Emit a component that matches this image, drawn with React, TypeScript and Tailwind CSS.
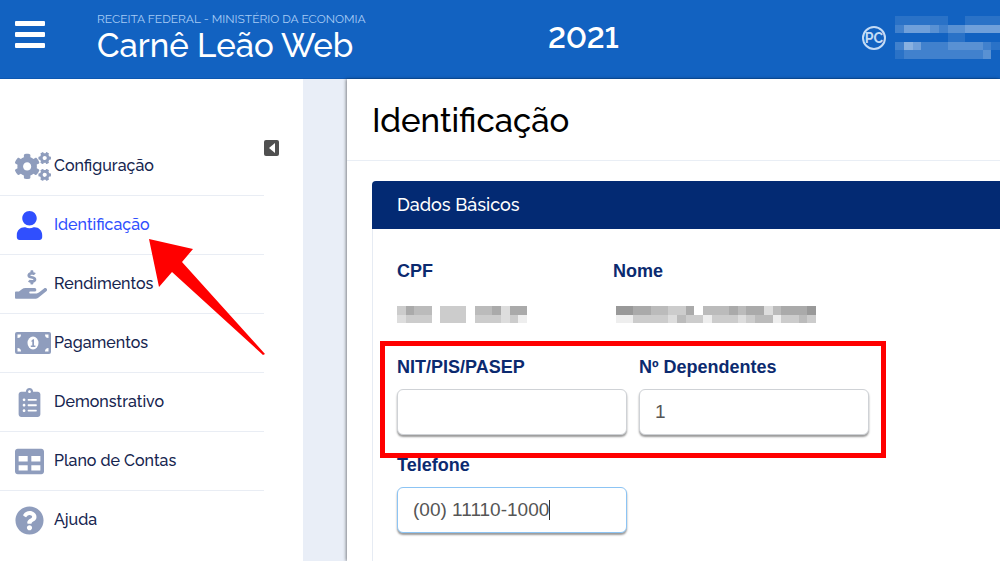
import React from 'react';
import {
  FaClipboardList,
  FaCogs,
  FaHandHoldingUsd,
  FaQuestionCircle,
  FaTable,
  FaUser,
} from 'react-icons/fa';

const BanknoteIcon: React.FC<{ className?: string }> = ({ className }) => (
  <svg className={className} viewBox="0 0 36 29" aria-hidden="true">
    <rect y="3" width="36" height="22" rx="2" fill="currentColor" />
    <path
      fill="white"
      d="M2.5 5.5h3.5a3.5 3.5 0 0 1-3.5 3.5zM33.5 5.5H30a3.5 3.5 0 0 0 3.5 3.5zM2.5 22.5H6A3.5 3.5 0 0 0 2.5 19zM33.5 22.5H30a3.5 3.5 0 0 1 3.5-3.5z"
    />
    <ellipse cx="18" cy="14" rx="5.5" ry="6.5" fill="white" />
    <path d="M16.4 11.8 18 10.3h1v6.2h1.4V18h-4.6v-1.5h1.5v-4.1l-.7.5z" fill="currentColor" />
  </svg>
);

const menuItems = [
  { id: 'configuracao', label: 'Configuração', icon: FaCogs, size: 'w-9 h-[29px]' },
  { id: 'identificacao', label: 'Identificação', icon: FaUser, size: 'size-[29px]' },
  { id: 'rendimentos', label: 'Rendimentos', icon: FaHandHoldingUsd, size: 'w-8 h-[29px]' },
  { id: 'pagamentos', label: 'Pagamentos', icon: BanknoteIcon, size: 'w-9 h-[29px]' },
  { id: 'demonstrativo', label: 'Demonstrativo', icon: FaClipboardList, size: 'size-[29px]' },
  { id: 'plano', label: 'Plano de Contas', icon: FaTable, size: 'size-[29px]' },
  { id: 'ajuda', label: 'Ajuda', icon: FaQuestionCircle, size: 'size-[29px]' },
];

// one digit per cell, 0 = empty, 9 = strongest
const userMask = ['111111001111', '244432334444', '000000110000', '254222333321', '122222222230'];
const cpfMask = ['354403330445255', '233303330333231'];
const nameMask = ['66554433504445455245556', '11333324331333234413343'];

interface MaskProps {
  rows: string[];
  className: string;
}

const Mask: React.FC<MaskProps> = ({ rows, className }) => (
  <svg
    className={className}
    viewBox={`0 0 ${rows[0].length} ${rows.length}`}
    preserveAspectRatio="none"
    shapeRendering="crispEdges"
    aria-hidden="true"
  >
    {rows.map((row, y) =>
      row.split('').map((value, x) => (
        <rect key={`${x}-${y}`} x={x} y={y} width="1" height="1" fill="currentColor" opacity={Number(value) / 10} />
      ))
    )}
  </svg>
);

const Header: React.FC = () => (
  <header className="flex h-[79px] items-start border-b border-[#0d57b0] bg-[#1262c1] text-white">
    <button type="button" aria-label="Menu" className="ml-[15px] mt-[21px] mr-[52px]">
      <svg viewBox="0 0 30 27" className="h-[27px] w-[30px]" fill="currentColor">
        <rect width="30" height="5" rx="1" />
        <rect y="11" width="30" height="5" rx="1" />
        <rect y="22" width="30" height="5" rx="1" />
      </svg>
    </button>
    <div className="w-[451px] pt-3">
      <p className="text-[12px] leading-[14px] text-[#a6cbf5]">RECEITA FEDERAL - MINISTÉRIO DA ECONOMIA</p>
      <h1 className="text-[33px] leading-10 font-medium">Carnê Leão Web</h1>
    </div>
    <span className="pt-[18px] text-[30px] leading-10 font-semibold lining-nums">2021</span>
    <div className="ml-auto flex items-start gap-[9px] pt-4">
      <span className="mt-2.5 flex size-6 items-center justify-center rounded-full border-2 border-[#c4dbf5] text-[14px] font-bold text-[#c4dbf5]">
        PC
      </span>
      <Mask rows={userMask} className="h-[43px] w-[105px]" />
    </div>
  </header>
);

const Sidebar: React.FC = () => (
  <aside className="relative flex w-[303px] shrink-0 items-start pt-[58px]">
    <nav className="flex-1">
      <ul>
        {menuItems.map(({ id, label, icon: Icon, size }) => (
          <li key={id} className="border-b border-[#e9edf4] last:border-b-0">
            <a
              href={`#${id}`}
              className={`flex h-[58px] items-center pl-[15px] text-[16px] font-medium ${
                id === 'identificacao' ? 'text-[#304ffe]' : 'text-[#16254f]'
              }`}
            >
              <span className={`w-[39px] shrink-0 ${id === 'identificacao' ? '' : 'text-[#8f9dbd]'}`}>
                <Icon className={size} />
              </span>
              {label}
            </a>
          </li>
        ))}
      </ul>
    </nav>
    <button
      type="button"
      aria-label="Recolher menu"
      className="mt-[3px] mr-6 flex h-4 w-[15px] items-center justify-center rounded-xs bg-[#505050]"
    >
      <svg viewBox="0 0 6 10" className="h-2.5 w-1.5" fill="white">
        <path d="M6 0v10L0 5z" />
      </svg>
    </button>
    {/* arrow pointing at the current section */}
    <svg viewBox="0 0 118 118" className="absolute top-[159px] left-[148px] size-[118px]" fill="#ff0000">
      <path d="M1 1 45 11 34 24 117 116 115 117 24 34 11 49z" />
    </svg>
  </aside>
);

interface FieldProps {
  id: string;
  label: string;
  value: string;
  focused?: boolean;
}

const Field: React.FC<FieldProps> = ({ id, label, value, focused }) => (
  <div className="w-[230px]">
    <label htmlFor={id} className="block text-[18px] leading-5 font-bold text-[#0b2a6f]">
      {label}
    </label>
    <div
      className={`mt-3 flex h-[46px] items-center rounded-md border bg-white px-[15px] text-[19px] text-[#555] shadow-[0_2px_2px_rgba(0,0,0,0.4)] ${
        focused ? 'border-[#8cc4f4]' : 'border-[#cfd2d6]'
      }`}
    >
      <input id={id} type="text" defaultValue={value} className="field-sizing-content max-w-full min-w-1 outline-none" />
      {focused && <span className="h-5 w-px bg-[#333]" />}
    </div>
  </div>
);

const App: React.FC = () => {
  return (
    <div className="flex h-screen flex-col overflow-hidden bg-white font-['Raleway','Lato',sans-serif]">
      <Header />
      <div className="flex min-h-0 flex-1">
        <Sidebar />
        <div className="w-11 shrink-0 bg-[#e9eef7]" />
        <main className="min-w-0 flex-1 bg-white shadow-[-1px_0_3px_rgba(0,0,0,0.45)]">
          <h2 className="border-b border-[#e9eef5] pt-5 pb-[18px] pl-[25px] text-[33px] leading-[43px] font-medium text-black">
            Identificação
          </h2>
          <section className="mt-5 ml-[25px] font-['Liberation_Sans',Arial,sans-serif]">
            <h3 className="rounded-tl-sm bg-[#032a73] pl-[25px] font-['Raleway','Lato',sans-serif] text-[18px] leading-[48px] font-medium text-white">
              Dados Básicos
            </h3>
            <div className="border-l border-[#e6ebf3] pt-8 pb-10 pl-6">
              <dl className="flex text-[18px] leading-5">
                <div className="w-[216px]">
                  <dt className="font-bold text-[#0b2a6f]">CPF</dt>
                  <dd className="mt-[25px]">
                    <Mask rows={cpfMask} className="h-[17px] w-[130px] text-[#555]" />
                  </dd>
                </div>
                <div>
                  <dt className="font-bold text-[#0b2a6f]">Nome</dt>
                  <dd className="mt-[25px] pl-[3px]">
                    <Mask rows={nameMask} className="h-[17px] w-[200px] text-[#555]" />
                  </dd>
                </div>
              </dl>
              <div className="relative mt-[34px] flex gap-3">
                <Field id="nit" label="NIT/PIS/PASEP" value="" />
                <Field id="dependentes" label="Nº Dependentes" value="1" />
                <div className="pointer-events-none absolute -top-4 -left-[17px] h-[117px] w-[506px] border-[5px] border-[#ff0000]" />
              </div>
              <div className="mt-5">
                <Field id="telefone" label="Telefone" value="(00) 11110-1000" focused />
              </div>
            </div>
          </section>
        </main>
      </div>
    </div>
  );
};

export default App;
